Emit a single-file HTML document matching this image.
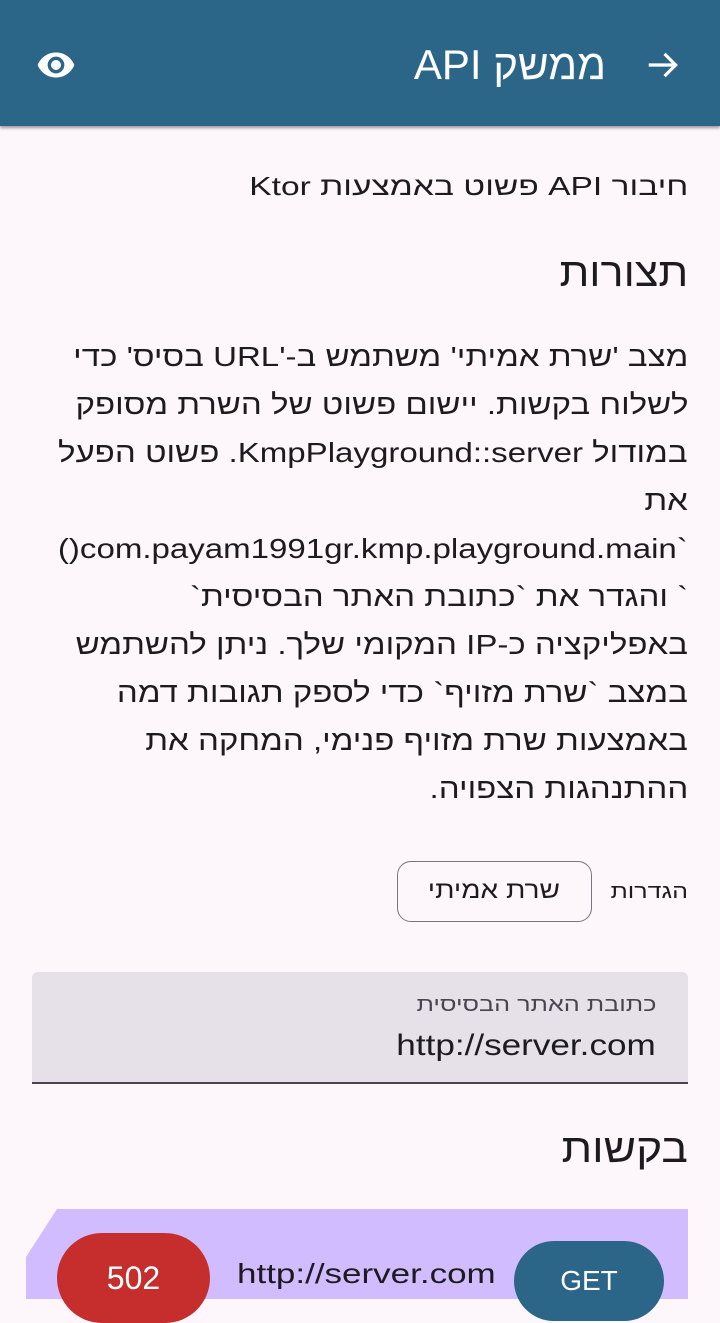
<!DOCTYPE html>
<html><head><meta charset="utf-8"><style>
body{margin:0;width:720px;height:1280px;overflow:hidden;background:#fdf7fc;font-family:"Liberation Sans","Noto Sans CJK SC",sans-serif;position:relative;color:#1d1b20}
.hdr{position:absolute;left:0;top:0;width:720px;height:126px;background:#2b6587;box-shadow:0 2px 3px rgba(0,0,0,.4);z-index:2}
.l{position:absolute;right:32px;direction:rtl;white-space:nowrap;font-size:28px;line-height:48px;transform-origin:right center;transform:scaleX(1.18)}
</style></head><body>
<div class="hdr">
<svg style="position:absolute;left:34px;top:45px" width="44" height="40" viewBox="0 0 24 24"><path fill="#fff" d="M12 4.5C7 4.5 2.7 7.6 1 12c1.7 4.4 6 7.5 11 7.5s9.3-3.1 11-7.5c-1.7-4.4-6-7.5-11-7.5zM12 17a5 5 0 1 1 0-10 5 5 0 0 1 0 10zm0-8a3 3 0 1 0 0 6 3 3 0 0 0 0-6z"/></svg>
<div style="position:absolute;right:114px;top:40px;font-size:42px;color:#fff;direction:rtl;line-height:50px">ממשק API</div>
<svg style="position:absolute;left:644px;top:46px" width="38" height="38" viewBox="0 0 24 24"><path fill="none" stroke="#fff" stroke-width="2" d="M3 12h17M13 5l7 7-7 7"/></svg>
</div>
<div class="l" style="top:162px;font-size:26px;transform:scaleX(1.29)">חיבור API פשוט באמצעות Ktor</div>
<div class="l" style="top:246px;font-size:40px;line-height:54px;transform:scaleX(1.08)">תצורות</div>
<div class="l" style="top:333px">מצב 'שרת אמיתי' משתמש ב-'URL בסיס' כדי</div>
<div class="l" style="top:381px">לשלוח בקשות. יישום פשוט של השרת מסופק</div>
<div class="l" style="top:429px">במודול KmpPlayground::server. פשוט הפעל</div>
<div class="l" style="top:477px">את</div>
<div class="l" style="top:525px;direction:ltr">()com.payam1991gr.kmp.playground.main`</div>
<div class="l" style="top:573px">` והגדר את `כתובת האתר הבסיסית`</div>
<div class="l" style="top:621px">באפליקציה כ-IP המקומי שלך. ניתן להשתמש</div>
<div class="l" style="top:669px">במצב `שרת מזויף` כדי לספק תגובות דמה</div>
<div class="l" style="top:717px">באמצעות שרת מזויף פנימי, המחקה את</div>
<div class="l" style="top:765px">ההתנהגות הצפויה.</div>
<div class="l" style="top:870px;font-size:20px;line-height:44px;transform:scaleX(1.25)">הגדרות</div>
<div style="position:absolute;left:397px;top:861px;width:193px;height:59px;border:1.5px solid #79747e;border-radius:14px"></div>
<div class="l" style="top:867px;right:160px;font-size:24px;line-height:48px;transform:scaleX(1.17)">שרת אמיתי</div>
<div style="position:absolute;left:32px;top:972px;width:656px;height:110px;background:#e6e0e9;border-radius:6px 6px 0 0;border-bottom:2px solid #49454f"></div>
<div class="l" style="top:990px;right:64px;font-size:20px;line-height:30px;color:#49454f;transform:scaleX(1.26)">כתובת האתר הבסיסית</div>
<div class="l" style="top:1026px;right:64px;font-size:30px;line-height:40px;transform:scaleX(1.17);direction:ltr">http://server.com</div>
<div class="l" style="top:1122px;font-size:40px;line-height:54px;transform:scaleX(1.11)">בקשות</div>
<div style="position:absolute;left:26px;top:1209px;width:662px;height:90px;background:#d0bcfe;clip-path:polygon(31px 0,100% 0,100% 100%,0 100%,0 48px)"></div>
<div style="position:absolute;left:57px;top:1233px;width:153px;height:90px;background:#c62e2e;border-radius:45px;color:#fff;font-size:32px;text-align:center;line-height:90px">502</div>
<div style="position:absolute;left:237px;top:1258px;font-size:28px;color:#1d1b20;transform-origin:left center;transform:scaleX(1.25)">http://server.com</div>
<div style="position:absolute;left:514px;top:1241px;width:150px;height:80px;background:#2b6587;border-radius:40px;color:#fff;font-size:28px;text-align:center;line-height:80px">GET</div>
</body></html>
